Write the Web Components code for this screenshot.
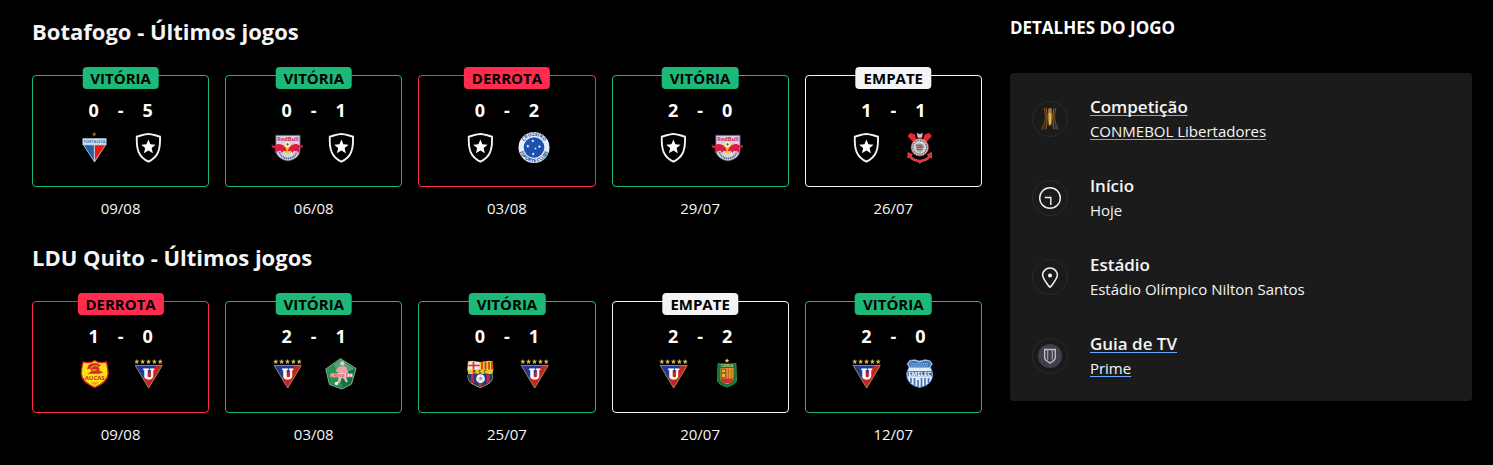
<!DOCTYPE html>
<html lang="pt-BR">
<head>
<meta charset="utf-8">
<meta name="viewport" content="width=device-width, initial-scale=1">
<title>Botafogo x LDU Quito</title>
<style>
  html { background: #000; }
  body {
    margin: 0;
    background: #000;
    color: #f5f5f5;
    font-family: "Segoe UI", "Open Sans", "Noto Sans", sans-serif;
    font-size: 15px;
    line-height: 24px;
  }
</style>
</head>
<body>
<match-page>
  <team-form team="Botafogo">
    <match-card result="win" home="fortaleza" away="botafogo" score="0-5" date="09/08"></match-card>
    <match-card result="win" home="bragantino" away="botafogo" score="0-1" date="06/08"></match-card>
    <match-card result="loss" home="botafogo" away="cruzeiro" score="0-2" date="03/08"></match-card>
    <match-card result="win" home="botafogo" away="bragantino" score="2-0" date="29/07"></match-card>
    <match-card result="draw" home="botafogo" away="corinthians" score="1-1" date="26/07"></match-card>
  </team-form>
  <team-form team="LDU Quito">
    <match-card result="loss" home="aucas" away="ldu" score="1-0" date="09/08"></match-card>
    <match-card result="win" home="ldu" away="orense" score="2-1" date="03/08"></match-card>
    <match-card result="win" home="barcelona" away="ldu" score="0-1" date="25/07"></match-card>
    <match-card result="draw" home="ldu" away="cuenca" score="2-2" date="20/07"></match-card>
    <match-card result="win" home="ldu" away="emelec" score="2-0" date="12/07"></match-card>
  </team-form>
  <game-details slot="aside" heading="DETALHES DO JOGO">
    <detail-item icon="trophy" label="Competição" href="#competicao">CONMEBOL Libertadores</detail-item>
    <detail-item icon="clock" label="Início">Hoje</detail-item>
    <detail-item icon="pin" label="Estádio">Estádio Olímpico Nilton Santos</detail-item>
    <detail-item icon="channel" label="Guia de TV" href="#tv">Prime</detail-item>
  </game-details>
</match-page>

<script>
const star = (cx, cy, r, fill) => {
  const pts = [];
  for (let i = 0; i < 10; i++) {
    const a = -Math.PI / 2 + i * Math.PI / 5, q = i % 2 ? r * 0.45 : r;
    pts.push((cx + q * Math.cos(a)).toFixed(2) + ',' + (cy + q * Math.sin(a)).toFixed(2));
  }
  return `<polygon points="${pts.join(' ')}" fill="${fill}"/>`;
};

const CRESTS = {
  fortaleza: `
    ${star(16.2, 2.2, 2.2, '#b98236')}
    <path d="M4.5 6.3h24v6L16.5 30.5 4.5 12.3z" fill="#c9d6e2"/>
    <path d="M6 13.3h9.800v14.900z" fill="#1b62ac"/><path d="M16.800 13.300h10.400L16.800 28.400z" fill="#ea1c12"/>
    <path d="M5.500 7.300h22v4.400h-22z" fill="#cfe2f0"/>
    <text x="16.500" y="11" font-size="3.800" text-anchor="middle" font-weight="700" fill="#3f78ad">FORTALEZA</text>`,
  botafogo: `
    <path d="M16.4 2c3.6 0 7.4 1.6 11.6 2.600.5 12.600-1.600 20.200-11.600 25C6.400 24.800 4.300 17.200 4.800 4.600 9 3.600 12.800 2 16.400 2z" fill="#000" stroke="#f4f4f4" stroke-width="1.900"/>
    ${star(16.4, 15, 7.6, '#fff')}`,
  bragantino: `
    <path d="M4.8 3.200h24.300v15c0 6-6 10-12.100 10.700C10.800 28.200 4.800 24.200 4.800 18.200z" fill="#d4d5df" stroke="#444a6b" stroke-width=".8"/>
    <path d="M8.400 20c1 4 4.800 6.200 8.600 6.600 3.800-.4 7.600-2.600 8.600-6.600" fill="none" stroke="#59607f" stroke-width="1.800" stroke-dasharray="1.200 .7"/>
    <circle cx="16.800" cy="15.600" r="5.600" fill="#fcc31d"/>
    <text x="17" y="9.400" font-size="5.600" text-anchor="middle" font-weight="700" fill="#d6264b">RedBull</text>
    <path d="M.6 12.200c1.200 1 2 1.500 3.400 1.500 2.500-3.100 7.600-2 10.600 2l1.200 3.500-3-.4-2 2.200-1-2.200-4 .7-1.300 2.500-.8-3.400 1-2-3.600-1.200z" fill="#dc1c43"/>
    <path d="M32 12.200c-1.200 1-2 1.500-3.400 1.500-2.500-3.100-7.600-2-10.600 2l-1.200 3.500 3-.4 2 2.200 1-2.200 4 .7 1.300 2.500.8-3.400-1-2 3.600-1.200z" fill="#dc1c43"/>
    <circle cx="16.500" cy="12.600" r="2.800" fill="#f3f3f3"/><path d="M15.300 12l1.200-1 1.300 1-.5 1.500h-1.500z" fill="#4c546a"/>`,
  cruzeiro: `
    <circle cx="16" cy="15.500" r="15.500" fill="#e4edf8"/><circle cx="16" cy="15.500" r="10.300" fill="#1e51ae"/>
    <defs><path id="up" d="M4.300 15.500a11.700 11.700 0 0 1 23.400 0"/><path id="dn" d="M1.300 15.500a14.700 14.700 0 0 0 29.400 0"/></defs>
    <text font-size="4.800" font-weight="700" fill="#1e4d9c"><textPath href="#up" startOffset="50%" text-anchor="middle">CRUZEIRO</textPath></text>
    <text font-size="4.800" font-weight="700" fill="#1e4d9c"><textPath href="#dn" startOffset="50%" text-anchor="middle">ESPORTE CLUBE</textPath></text>
    ${star(14.800, 9, 1.700, '#fff')}${star(9.800, 14.200, 1.700, '#fff')}${star(21.400, 14.500, 1.700, '#fff')}${star(17.500, 16.500, 1.200, '#fff')}${star(15.200, 22, 1.700, '#fff')}`,
  corinthians: `
    <path d="M6.300 1l4.300 1.200L13 9l-3 2-6.500-7zM25.200 1l-4.300 1.200L18.500 9l3 2L28 4z" fill="#ee2431"/>
    <path d="M12.800.8l3 1.500 3-1.500-.8 5h-4.400z" fill="#d9bfc0"/>
    <path d="M4.200 20.500l4.200 2.200-1.500 1c1.700 2.800 4.700 4 8.900 4.500 4.200-.5 7.200-1.700 8.900-4.500l-1.500-1 4.200-2.200.5 5.300-1.600-.6c-2.500 3-5.700 4-8.200 4.300L15.800 31.500l-2.300-2c-2.500-.3-5.700-1.300-8.200-4.300l-1.600.6z" fill="#ee2431" stroke="#d8a0a4" stroke-width=".5"/>
    <circle cx="15.800" cy="15.300" r="8.700" fill="#d7d7d7" stroke="#d63a42" stroke-width=".7"/>
    <circle cx="15.800" cy="15.300" r="6.900" fill="none" stroke="#555" stroke-width="1.500" stroke-dasharray="1 .8"/>
    <path d="M11.300 12.500l4-1.500 5 2-1.200 5.800-3 2.200-4-2.300z" fill="#aaa"/><path d="M12 13.300l6-.2M12.300 15.300h7M13 17.500h5" stroke="#444" stroke-width=".8"/>
    <path d="M13.500 14.400l5-1.500-1 2z" fill="#cf4148"/>`,
  aucas: `
    <path d="M16.700 2.400c3.400 2.500 7.500 2.700 11.600 1.500.7 3.400 1.900 6.900 1.800 12-.4 6.800-6.100 10.400-13.400 13.700C9.400 26.300 3.700 22.700 3.300 15.900c-.1-5.100 1.100-8.600 1.800-12 4.100 1.200 8.200 1 11.600-1.500z" fill="#fbe216" stroke="#d41f27" stroke-width="1.300"/>
    <path d="M10.300 7.500c3.500-3 8.800-3.300 12.600-.3l-2.500 2 1.500 2-1 1.500 4.700 1.500-4.200 1.600H9.500l4-2.500-1.300-2.800-3.300 1z" fill="#d92b24"/>
    <path d="M13 9.500l3-1.600 4.300.2M14 12h4.500" stroke="#fbd11a" stroke-width="1"/>
    <text x="16.700" y="21.800" font-size="6" text-anchor="middle" font-weight="700" fill="#cf1d20">AUCAS</text>
    <path d="M12 24.200h9.500l-4.800 3z" fill="#ee9c20"/>`,
  ldu: `
    ${[4.800, 10.600, 16.500, 22.400, 28.200].map(x => star(x, 3.700, 2.700, '#d3ba4c')).join('')}
    <path d="M3.200 7.500h27L16.700 30z" fill="#243592"/><path d="M30.200 7.500L16.700 30l-5.900-9.900L24.500 7.500z" fill="#c42426"/>
    <path d="M3.200 7.500h27L16.700 30z" fill="none" stroke="#a8925a" stroke-width=".9"/>
    <text x="16.700" y="20.600" font-family="Liberation Serif, serif" font-size="15" text-anchor="middle" font-weight="700" fill="#fff" stroke="#fff" stroke-width=".9">U</text>`,
  orense: `
    <path d="M15.500.6L31 10.500 26.500 26l-9.500 5L4.500 26.500.8 11z" fill="#12713c" stroke="#a7cdb3" stroke-width=".8"/>
    <path d="M15.500 1.500L2 11.200 4 20 29.500 11z" fill="#4fa374"/><path d="M2 11.200L9 6.500 18.500 30 5.500 26z" fill="#2b8f50"/>
    <circle cx="17.300" cy="5.400" r="2.200" fill="#e8c8c6"/>
    <path d="M14 8.500l6.500-.3 3 6.500-2.500.6.500 3.500-8.500-.3.300-4.500-3-.5z" fill="#eda2a5"/>
    <path d="M14 18l-1.800 7h2.600l2.500-6 3.700 5.500 2-.7-2.500-6z" fill="#dfb9b4"/>
    <path d="M5.500 15.600h22v3.600h-22z" fill="#f1eeee"/>
    <text x="16.500" y="18.800" font-size="3.600" text-anchor="middle" font-weight="700" fill="#d83132">ORENSE S.C.</text>
    <circle cx="11.500" cy="25.500" r="1.800" fill="#edf5ef"/>`,
  barcelona: `
    <path d="M4 3.200l4-.4 8.300 1.100 8.300-1.100 4 .4.800 8.500-1 3.300.7 3.500c0 6-6 8.500-12.800 11.500C9.500 27 3.500 24.500 3.500 18.500l.7-3.500-1-3.300z" fill="#eccb24"/>
    <path d="M4.600 4h10.700v7.500H4.200z" fill="#f5e9e5"/><path d="M9.500 4v7.500M4.400 7.500h11" stroke="#dc2733" stroke-width="1.700"/>
    <path d="M18 4v7.500M21.500 4v7.500M25 4v7.500M28 4v7.500" stroke="#d72a2a" stroke-width="1.600"/>
    <path d="M4 16h24.600v4c-1 4-5.500 6.500-12.300 9.300C9.500 26.500 5 24 4 20z" fill="#173b86"/>
    <path d="M7 16h3.200v9.800L7 23.700zM22.500 16h3.200v7.700l-3.200 2.100zM14.500 16h3.600v12l-1.800.8-1.800-.8z" fill="#ca2230"/>
    <text x="16.300" y="15.700" font-size="4.800" text-anchor="middle" font-weight="700" fill="#3a3a2a">B. S. C.</text>
    <circle cx="16.500" cy="20.700" r="4.400" fill="#f3f4f6"/><path d="M15 20l1.600-1.200 1.600 1.200-.6 1.900h-2z" fill="#8d95a8"/><path d="M16.600 16.500v2M12.500 20l2.200.3M20.600 20l-2.200.3M14 24l1.300-1.800M19.200 24L18 22.200" stroke="#9aa1b0" stroke-width=".5"/>`,
  cuenca: `
    ${star(16, 2.700, 2.500, '#f0d040')}
    <path d="M7 5.600c6 .6 12 .6 18 0l.5 17.500c-1.500 3.400-5.500 4.500-9.500 6-4-1.500-8-2.600-9.500-6z" fill="#12743a" stroke="#379c48" stroke-width=".8"/>
    <text x="16" y="9.400" font-size="3" text-anchor="middle" font-weight="700" fill="#c8dca4">CUENCA</text>
    <path d="M9.500 10h13v12.500l-3 2.500-3.500 1-3.500-1-3-2.500z" fill="#e3a22b"/>
    <path d="M10 10.500h5.500v10H10z" fill="#a45f29"/><path d="M11 12h3v2h-3zM11 16h3v3h-3z" fill="#e8b541"/>
    <path d="M17.500 10.500v10M20.500 10.500v10" stroke="#dc6224" stroke-width="1.500"/>
    <path d="M9.500 20.500h13v2l-3 2.500h-7l-3-2.500z" fill="#c93331"/>`,
  emelec: `
    <path d="M5.500 2.500l5-.8 5.200 1.400 5.200-1.400 5 .8 2.500 3.500-2 3 2.300 6c.3 8-4 12.500-13 14.500-9-2-13.300-6.500-13-14.500L5 9 3 6z" fill="#e3ebf6" stroke="#6c92c6" stroke-width=".8"/>
    <path d="M5.500 3.500l5-.7 5.200 1.400 5.200-1.400 5 .7 1.300 2.500-2 3.500H6.200L4.200 6z" fill="#3973b8"/>
    <path d="M6 5.800h19M7 8h17" stroke="#dbe8f7" stroke-width=".8" stroke-dasharray="1.300 .8"/>
    <path d="M3.600 13.200h24.200v5H3.600z" fill="#3267ab"/>
    <text x="15.700" y="17.800" font-size="6" text-anchor="middle" font-weight="700" fill="#fff">EMELEC</text>
    <path d="M7 20v5M10.500 20v7.500M14 22v7M17.500 20v9M21 20v7.500M24.500 20v5" stroke="#3f73b5" stroke-width="1.600"/>`
};

const ICONS = {
  trophy: `
    <g fill="none" stroke-width="1.200">
      <path d="M12.200 7l1.500 8.500-1.200 7-3 6M23.800 7l-1.500 8.500 1.200 7 3 6" stroke="#6e4820"/>
      <path d="M14.200 7.200l1 9-1 12M21.800 7.200l-1 9 1 12" stroke="#8a5c28"/>
      <path d="M12.500 24l-.7 5M23.500 24l.7 5" stroke="#5b3819"/>
    </g>
    <path d="M16.300 8l1.700-1.500L19.700 8l.5 8-.8 8.500h-2.800L15.800 16z" fill="#a87a2d"/>
    <path d="M17.200 12h1.600v11h-1.600z" fill="#e8c45a"/>`,
  clock: `
    <circle cx="18" cy="18" r="10.300" fill="none" stroke="#f4f4f4" stroke-width="1.400"/>
    <path d="M12.800 17.500h6V25" fill="none" stroke="#f4f4f4" stroke-width="1.400"/>`,
  pin: `
    <path d="M18 28.300c-.7-.6-1.300-1.300-1.800-2C12.500 21.300 10.600 18.800 10.600 16a7.400 6.900 0 0 1 14.800 0c0 2.800-1.900 5.300-5.600 10.300-.5.700-1.100 1.400-1.800 2z" fill="none" stroke="#f4f4f4" stroke-width="1.500"/>
    <circle cx="18" cy="16.500" r="2" fill="#fff"/>`,
  channel: `
    <circle cx="18" cy="18" r="12" fill="#403f4b"/>
    <path d="M12.700 11.500h10.600v8.500c0 2.200-3.300 3.500-5.300 5.200-2-1.700-5.300-3-5.300-5.200z" fill="none" stroke="#c4c4c8" stroke-width="1.300"/>
    <path d="M15.700 11.500v10.300M20.300 11.500v10.300" stroke="#aaaab0" stroke-width="1.100"/>`
};

class ClubCrest extends HTMLElement {
  constructor() { super(); this.attachShadow({ mode: 'open' }); }
  connectedCallback() {
    this.shadowRoot.innerHTML = `
      <style>
        :host { display: block; width: 32px; height: 32px; }
        svg { display: block; width: 100%; height: 100%; overflow: visible; }
      </style>
      <svg viewBox="0 0 32 32" aria-hidden="true">${CRESTS[this.getAttribute('club')]}</svg>`;
  }
}

class MatchCard extends HTMLElement {
  static results = { win: 'VITÓRIA', loss: 'DERROTA', draw: 'EMPATE' };
  constructor() { super(); this.attachShadow({ mode: 'open' }); }
  connectedCallback() {
    const get = n => this.getAttribute(n);
    const [home, away] = get('score').split('-');
    this.shadowRoot.innerHTML = `
      <style>
        :host { display: block; text-align: center; --tone: #1db978; }
        :host([result="loss"]) { --tone: #ff2c4f; }
        :host([result="draw"]) { --tone: #f4f4f4; }
        article {
          position: relative;
          display: grid;
          grid-template-columns: 32px 22px 32px;
          justify-content: center;
          justify-items: center;
          row-gap: 10px;
          padding: 22px 0;
          border: 1px solid var(--tone);
          border-radius: 4px;
        }
        .badge {
          position: absolute;
          top: -9px;
          left: 50%;
          transform: translateX(-50%);
          padding: 0 8px;
          border-radius: 4px;
          background: var(--tone);
          color: #000;
          font-size: 15px;
          font-weight: 700;
          line-height: 22px;
        }
        .score { font-size: 18px; font-weight: 700; line-height: 24px; color: #fff; }
        club-crest:last-child { grid-column: 3; }
        time { display: block; margin-top: 9px; font-size: 15px; line-height: 24px; }
      </style>
      <article>
        <span class="badge">${MatchCard.results[get('result')]}</span>
        <span class="score">${home}</span><span class="score">-</span><span class="score">${away}</span>
        <club-crest club="${get('home')}"></club-crest>
        <club-crest club="${get('away')}"></club-crest>
      </article>
      <time>${get('date')}</time>`;
  }
}

class TeamForm extends HTMLElement {
  constructor() { super(); this.attachShadow({ mode: 'open' }); }
  connectedCallback() {
    this.shadowRoot.innerHTML = `
      <style>
        :host { display: block; }
        h2 { margin: 0 0 29px; font-size: 22px; font-weight: 700; line-height: 30px; }
        .row { display: grid; grid-template-columns: repeat(5, minmax(0, 1fr)); gap: 16px; }
      </style>
      <section>
        <h2>${this.getAttribute('team')} - Últimos jogos</h2>
        <div class="row"><slot></slot></div>
      </section>`;
  }
}

class DetailItem extends HTMLElement {
  constructor() { super(); this.attachShadow({ mode: 'open' }); }
  connectedCallback() {
    const href = this.getAttribute('href');
    const wrap = s => href ? `<a href="${href}">${s}</a>` : s;
    this.shadowRoot.innerHTML = `
      <style>
        :host { display: flex; align-items: center; gap: 22px; }
        .icon { flex: none; box-sizing: border-box; width: 36px; height: 36px; border: 1px solid #2b2b2b; border-radius: 50%; }
        svg { display: block; width: 36px; height: 36px; margin: -1px; }
        h4, p { margin: 0; line-height: 24px; }
        h4 { font-size: 17px; font-weight: 600; }
        p { font-size: 15px; }
        a { color: inherit; text-decoration: underline 1px #6aa9ff; text-underline-offset: 2px; text-decoration-skip-ink: none; }
      </style>
      <span class="icon"><svg viewBox="0 0 36 36" aria-hidden="true">${ICONS[this.getAttribute('icon')]}</svg></span>
      <div><h4>${wrap(this.getAttribute('label'))}</h4><p>${wrap('<slot></slot>')}</p></div>`;
  }
}

class GameDetails extends HTMLElement {
  constructor() { super(); this.attachShadow({ mode: 'open' }); }
  connectedCallback() {
    this.shadowRoot.innerHTML = `
      <style>
        :host { display: block; }
        h3 { margin: 0 0 33px; font-size: 17px; font-weight: 700; line-height: 24px; color: #fff; }
        .panel { display: grid; gap: 31px; padding: 22px 22px 21px; border-radius: 4px; background: #1b1b1b; }
      </style>
      <aside>
        <h3>${this.getAttribute('heading')}</h3>
        <div class="panel"><slot></slot></div>
      </aside>`;
  }
}

class MatchPage extends HTMLElement {
  constructor() { super(); this.attachShadow({ mode: 'open' }); }
  connectedCallback() {
    this.shadowRoot.innerHTML = `
      <style>
        :host { display: block; }
        main {
          display: grid;
          grid-template-columns: minmax(0, 37fr) minmax(0, 18fr);
          align-items: start;
          gap: 28px;
          padding: 16px 21px 0 32px;
        }
        .forms { display: grid; gap: 22px; }
        @media (max-width: 900px) { main { grid-template-columns: minmax(0, 1fr); } }
      </style>
      <main>
        <div class="forms"><slot></slot></div>
        <slot name="aside"></slot>
      </main>`;
  }
}

customElements.define('club-crest', ClubCrest);
customElements.define('match-card', MatchCard);
customElements.define('team-form', TeamForm);
customElements.define('detail-item', DetailItem);
customElements.define('game-details', GameDetails);
customElements.define('match-page', MatchPage);
</script>
</body>
</html>
